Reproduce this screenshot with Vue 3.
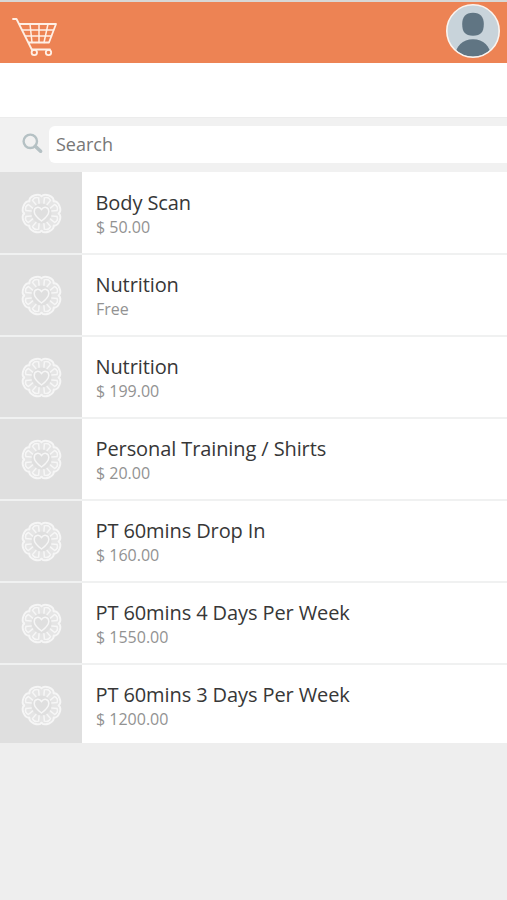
<template>
  <div class="store">
    <header class="topbar">
      <svg class="cart" viewBox="0 0 46 40" width="46" height="40">
        <g fill="none" stroke="#fff0e6" stroke-width="1.800" stroke-linecap="round" stroke-linejoin="round">
          <path d="M1 2h3.500l15.500 31M8 7h36l-7 18.500H17" />
          <path d="M10.500 13h31M13.500 19h26M18 7l2 18.500M27 7v18.500M36 7l-4 18.500" stroke-width="1.500" />
          <path d="M20 32.500h18" />
          <circle cx="22.300" cy="35.500" r="2.700" />
          <circle cx="36.500" cy="35.500" r="2.700" />
        </g>
      </svg>
      <svg class="avatar" viewBox="0 0 54 54" width="54" height="54">
        <defs>
          <clipPath id="avatar-clip"><circle cx="27" cy="27" r="25.800" /></clipPath>
        </defs>
        <circle cx="27" cy="27" r="26.200" fill="#c8d3da" />
        <g clip-path="url(#avatar-clip)" fill="#607583">
          <path d="M27 8.700C34.500 8.700 37.800 13 37.800 20C37.800 28 35 31.700 27 31.700S16.200 28 16.200 20C16.200 13 19.500 8.700 27 8.700Z" />
          <path d="M9.500 54C8.500 43 16 35.200 27 35.200S45.500 43 44.500 54Z" />
        </g>
        <circle cx="27" cy="27" r="26.200" fill="none" stroke="#fbf4ef" stroke-width="1.600" />
      </svg>
    </header>

    <div class="spacer"></div>

    <div class="search-bar">
      <svg class="search-icon" viewBox="0 0 22 22" width="22" height="22">
        <circle cx="8.300" cy="8.300" r="6.700" fill="none" stroke="#b5c1c4" stroke-width="2.400" />
        <path d="M13.300 13.300l5.300 4.900" stroke="#b5c1c4" stroke-width="3.600" stroke-linecap="round" />
      </svg>
      <div class="search-field">Search</div>
    </div>

    <ul class="items">
      <li v-for="(item, index) in items" :key="index" class="item">
        <div class="thumb">
          <svg viewBox="-21.500 -21.500 42 42" width="42" height="42">
            <g fill="none" stroke="#f6f6f6" stroke-linecap="round">
              <circle r="14" stroke-width="8" opacity="0.250" />
              <g v-for="angle in petals" :key="angle" :transform="`rotate(${angle})`">
                <path d="M-6.600 -16C-5 -20.600 5 -20.600 6.600 -16" stroke-width="2" />
                <path d="M-1.700 -10.500L-3.300 -15.500Q0 -18.500 3.300 -15.500L1.700 -10.500" stroke-width="1.500" />
              </g>
              <path d="M0 7.500C-4 4.500 -7.300 1.500 -7.300 -2C-7.300 -6.700 -2.300 -7.500 0 -4C2.300 -7.500 7.300 -6.700 7.300 -2C7.300 1.500 4 4.500 0 7.500Z" fill="#dfdfdf" stroke-width="1.500" />
            </g>
          </svg>
        </div>
        <div class="info">
          <div class="name">{{ item.name }}</div>
          <div class="price">{{ item.price }}</div>
        </div>
      </li>
    </ul>
  </div>
</template>

<script setup>
const items = [
  { name: 'Body Scan', price: '$ 50.00' },
  { name: 'Nutrition', price: 'Free' },
  { name: 'Nutrition', price: '$ 199.00' },
  { name: 'Personal Training / Shirts', price: '$ 20.00' },
  { name: 'PT 60mins Drop In', price: '$ 160.00' },
  { name: 'PT 60mins 4 Days Per Week', price: '$ 1550.00' },
  { name: 'PT 60mins 3 Days Per Week', price: '$ 1200.00' },
]

const petals = Array.from({ length: 8 }, (_, i) => i * 45 + 22.5)
</script>

<style>
body {
  margin: 0;
  background: #eeeeee;
}
</style>

<style scoped>
.store {
  min-height: 900px;
  background: #eeeeee;
  font-family: 'Open Sans', sans-serif;
}

.topbar {
  display: flex;
  align-items: flex-start;
  justify-content: space-between;
  box-sizing: border-box;
  height: 63px;
  padding: 2px 7px 0 12px;
  border-top: 2px solid #d8d8d6;
  background: #ed8354;
}

.cart {
  margin-top: 13px;
}

.spacer {
  height: 54px;
  background: #ffffff;
}

.search-bar {
  display: flex;
  align-items: flex-start;
  box-sizing: border-box;
  height: 55px;
  padding: 8px 0 0 22px;
  border-top: 1px solid #ececec;
  background: #f1f1f1;
}

.search-icon {
  margin: 7px 5px 0 0;
}

.search-field {
  flex: 1;
  height: 37px;
  padding-left: 7px;
  border-radius: 6px 0 0 6px;
  background: #ffffff;
  color: #777777;
  font-size: 18px;
  line-height: 36px;
}

.items {
  margin: 0;
  padding: 0;
  list-style: none;
}

.item {
  display: flex;
  box-sizing: border-box;
  height: 82px;
  border-bottom: 2px solid #f0f1f1;
  background: #ffffff;
}

.item:first-child {
  height: 83px;
}

.item:last-child {
  height: 78px;
  border-bottom: 0;
}

.thumb {
  box-sizing: border-box;
  width: 82px;
  padding: 19px 20px;
  background: #dfdfdf;
}

.thumb svg {
  display: block;
}

.info {
  padding: 17px 0 0 13.5px;
}

.item:first-child .thumb {
  padding-top: 20px;
}

.item:first-child .info {
  padding-top: 18px;
}

.name {
  color: #373737;
  font-size: 20px;
  letter-spacing: -0.1px;
  line-height: 25px;
  white-space: nowrap;
}

.price {
  margin-left: 0.5px;
  color: #929292;
  font-size: 16px;
  line-height: 24px;
}
</style>
